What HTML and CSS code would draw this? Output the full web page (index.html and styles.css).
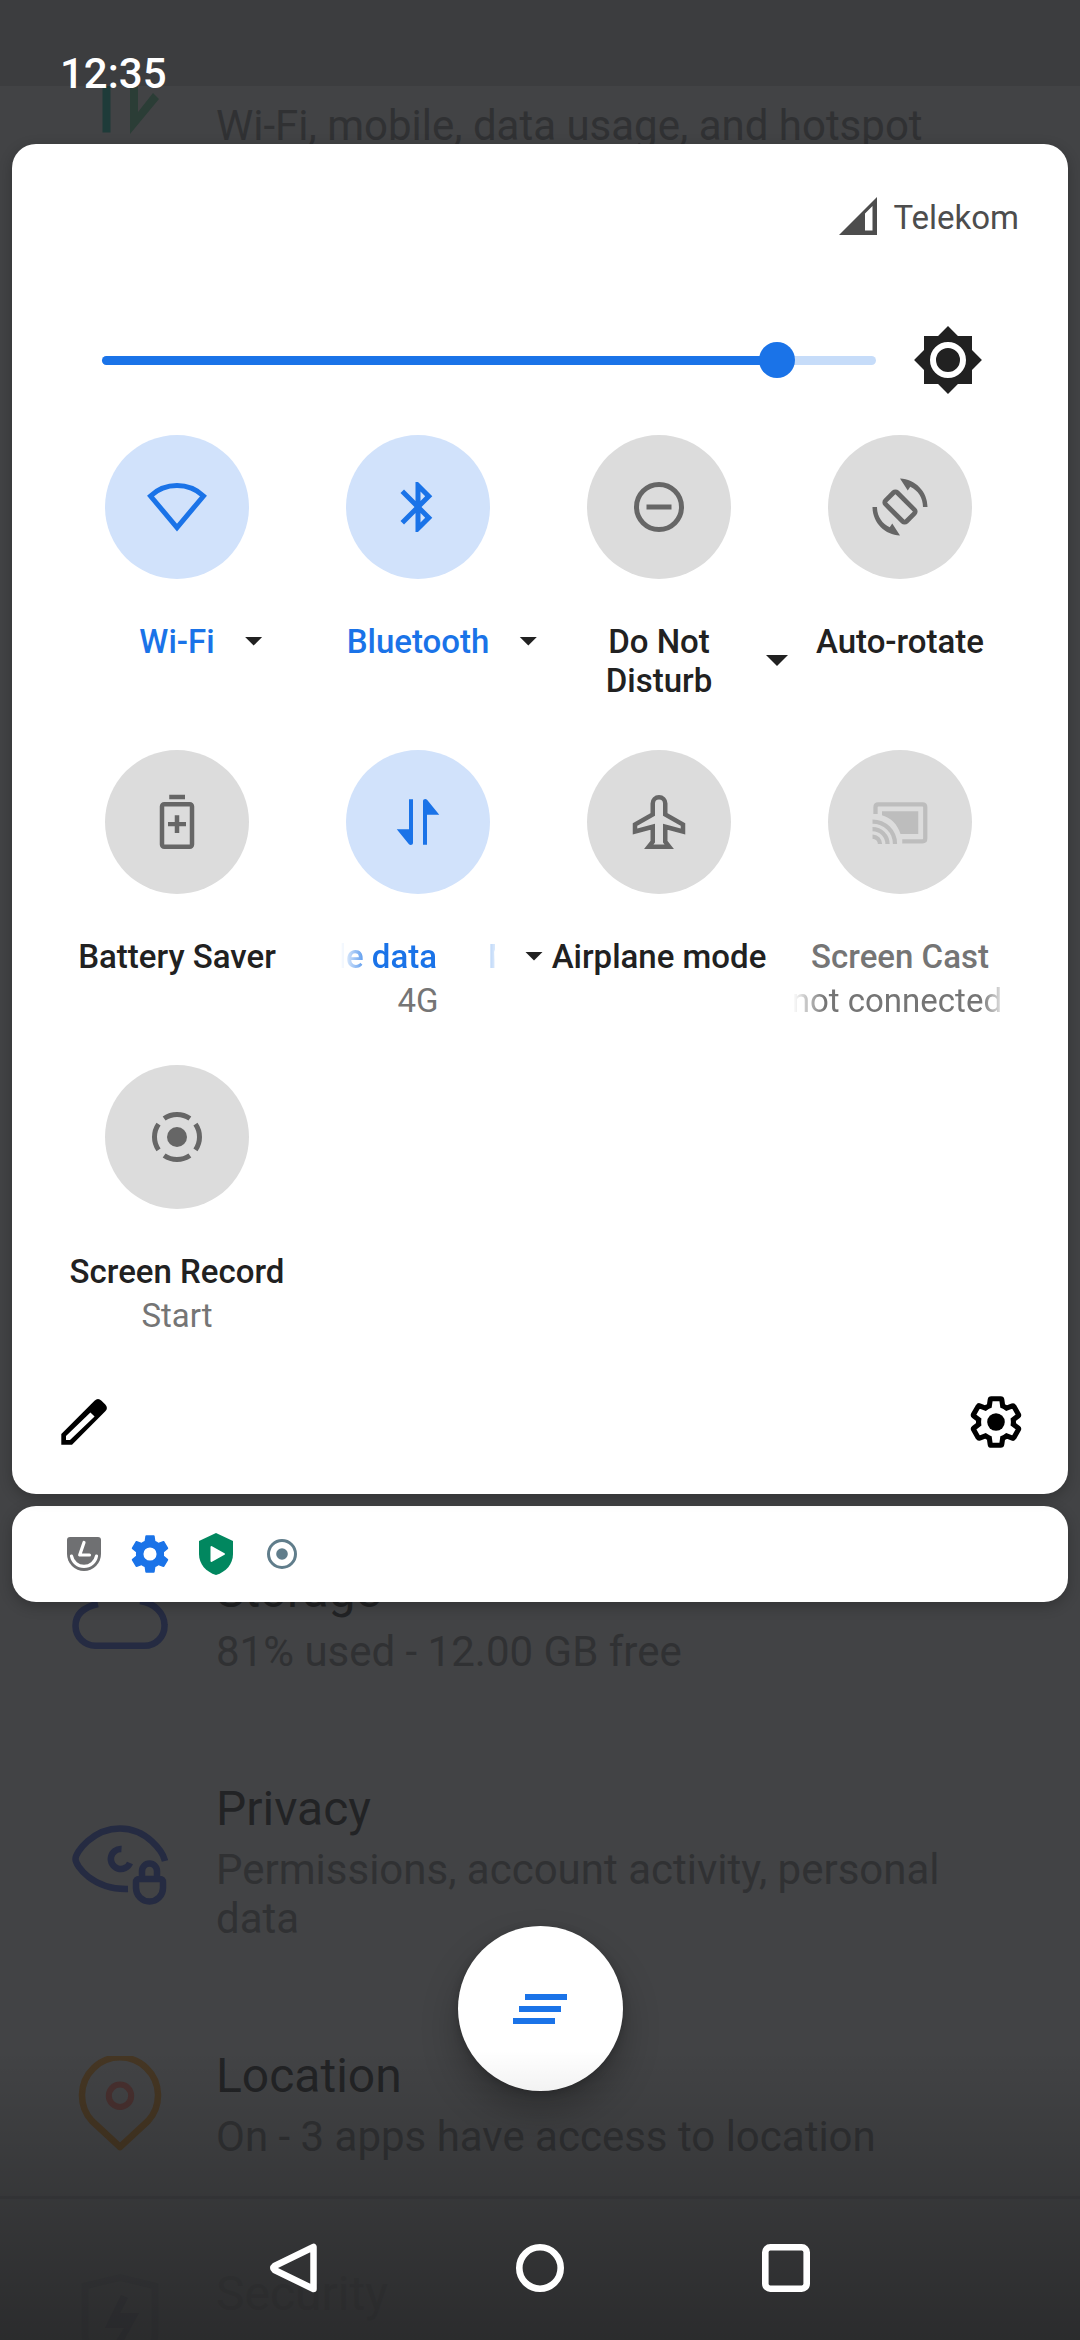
FILE: index.html
```html
<!DOCTYPE html>
<html lang="en">
<head>
<meta charset="utf-8">
<title>Quick settings</title>
<link rel="stylesheet" href="styles.css">
</head>
<body>
<div class="screen">

  <main class="settings">
    <section class="setting">
      <svg class="setting-icon" viewBox="0 0 96 96"><path d="M34.5 10V87.5" stroke="#1e3b39" stroke-width="8"/><path d="M58 20h8v47l15-19 6 6-29 35z" fill="#2b3d36"/></svg>
      <div class="setting-text"><h2>Network &amp; internet</h2><p>Wi‑Fi, mobile, data usage, and hotspot</p></div>
    </section>
    <section class="setting setting-storage">
      <svg class="setting-icon" viewBox="0 0 96 96"><path d="M26 33C12 36 3.500 43 3.500 55A20 20 0 0 0 24 74.800H72A20 20 0 0 0 92.500 54C92.500 42 82 32 68 30" class="line-blue"/></svg>
      <div class="setting-text"><h2>Storage</h2><p>81% used - 12.00 GB free</p></div>
    </section>
    <section class="setting setting-tall">
      <svg class="setting-icon" viewBox="0 0 96 96"><path d="M93 47C91 38 75 14.500 48 14.500C21 14.500 3.500 38 3.500 45S21 76 56 75" class="line-blue"/><path d="M49.500 35A10 10 0 1 0 58 49" class="line-blue"/><path d="M67.500 65H87.500Q91 65 91 68.500V74A13.500 13.500 0 0 1 64 74V68.500Q64 65 67.500 65ZM70 65V57a7.500 7.500 0 0 1 15 0V65" class="line-blue"/></svg>
      <div class="setting-text"><h2>Privacy</h2><p>Permissions, account activity, personal data</p></div>
    </section>
    <section class="setting">
      <svg class="setting-icon" viewBox="0 0 96 96"><path d="M48 91L20 65A38 38 0 1 1 76 65Z" fill="none" stroke="#453623" stroke-width="6.500" stroke-linejoin="round"/><circle cx="48" cy="39.700" r="11.200" fill="none" stroke="#48302f" stroke-width="6"/></svg>
      <div class="setting-text"><h2>Location</h2><p>On - 3 apps have access to location</p></div>
    </section>
    <section class="setting setting-faint">
      <svg class="setting-icon" viewBox="0 0 96 96"><path d="M13 12L48 3.500L83 12V60Q83 80 48 93Q13 80 13 60Z" fill="none" stroke="#3f4043" stroke-width="6.500"/><path d="M49 21L56 24L48 39H67L50 70H42L52 54H33Z" fill="#3d3e42"/></svg>
      <div class="setting-text"><h2>Security</h2></div>
    </section>
  </main>
  <div class="app-bar"></div>

  <div class="shade">
    <header class="status-bar"><span class="clock">12:35</span></header>

    <section class="panel">
      <div class="carrier">
        <svg width="38" height="38" viewBox="0 0 38 38"><path fill-rule="evenodd" d="M0 38L38 0V38ZM26 16.500V33.500H33.500V9Z"/></svg>
        <span>Telekom</span>
      </div>

      <div class="brightness">
        <div class="slider"><div class="slider-fill"></div><div class="slider-thumb"></div></div>
        <svg width="72" height="72" viewBox="0 0 24 24"><path fill="#212121" d="M20 8.690V4h-4.690L12 .69 8.690 4H4v4.690L.69 12 4 15.310V20h4.690L12 23.310 15.310 20H20v-4.690L23.310 12z"/><circle cx="12" cy="12" r="5" fill="none" stroke="#fff" stroke-width="2"/></svg>
      </div>

      <div class="tiles">
        <div class="tile on">
          <div class="bubble"><svg viewBox="6 6 60 60"><path d="M9.500 25A39 39 0 0 1 62.500 25L36 56.500Z" fill="none" stroke="currentColor" stroke-width="5"/></svg></div>
          <div class="label">Wi-Fi<i class="arrow"></i></div>
        </div>
        <div class="tile on">
          <div class="bubble"><svg viewBox="0 0 24 24"><path fill="currentColor" d="M17.710 7.710L12 2h-1v7.590L6.410 5 5 6.410 10.590 12 5 17.590 6.410 19 11 14.410V22h1l5.710-5.710L13.410 12zM13 5.830l1.880 1.880L13 9.590zM14.880 16.290L13 18.170v-3.760z"/></svg></div>
          <div class="label">Bluetooth<i class="arrow"></i></div>
        </div>
        <div class="tile">
          <div class="bubble"><svg viewBox="0 0 24 24"><circle cx="12" cy="12" r="9" fill="none" stroke="currentColor" stroke-width="2"/><path fill="currentColor" d="M7 11h10v2H7z"/></svg></div>
          <div class="label label-wrap">Do Not Disturb<i class="arrow arrow-large"></i></div>
        </div>
        <div class="tile">
          <div class="bubble"><svg viewBox="0 0 24 24"><path id="turn" fill="currentColor" d="M12 .6C18.100.8 23 5.800 23 12h-1.800c0-3.600-2-6.700-5.100-8.100l-1 1.500z"/><use href="#turn" transform="rotate(180 12 12)"/><rect x="6.100" y="8.700" width="11.800" height="6.600" rx="1" transform="rotate(45 12 12)" fill="none" stroke="currentColor" stroke-width="1.900"/></svg></div>
          <div class="label">Auto-rotate</div>
        </div>

        <div class="tile">
          <div class="bubble"><svg viewBox="0 0 24 24"><path fill="currentColor" d="M8.900 1.100h6.300v1.800H8.900zM11.100 9.300h1.800v2.700h2.700v1.700h-2.700v2.700h-1.800v-2.700H8.400V12h2.700z"/><rect x="6" y="4.900" width="12" height="17" rx=".9" fill="none" stroke="currentColor" stroke-width="1.800"/></svg></div>
          <div class="label">Battery Saver</div>
        </div>
        <div class="tile on">
          <div class="bubble"><svg viewBox="0 0 24 24"><path id="flow" fill="currentColor" d="M8.400 2.900h1.600v17.400c0 .9-1.100 1.200-1.700.5L3.500 14.900h4.900z"/><use href="#flow" transform="rotate(180 12 12)"/></svg></div>
          <div class="label label-wrap"><div class="marquee"><span>Mobile data</span><span>Mobile data</span></div><i class="arrow"></i></div>
          <div class="sub">4G</div>
        </div>
        <div class="tile">
          <div class="bubble"><svg viewBox="0 0 24 24"><path d="M9.500 9V4.600a2.500 2.500 0 0 1 5 0V9l7.100 4v2.800L14.500 13.900V19.900L16.100 21.900H7.900L9.500 19.900V13.900L2.400 15.800V13Z" fill="none" stroke="currentColor" stroke-width="1.800"/></svg></div>
          <div class="label">Airplane mode</div>
        </div>
        <div class="tile unavailable">
          <div class="bubble"><svg viewBox="0 0 24 24"><path fill="currentColor" d="M4.800 7.700H19.300V16.800H12.200C11 13 8.500 10.300 4.800 9.300Z"/><path d="M2.200 8.800V6q0-1.100 1.100-1.100H21q1.100 0 1.100 1.100v12.600q0 1.100-1.100 1.100H12.900M1 11.800a9 9 0 0 1 9 9M1 14.800a6 6 0 0 1 6 6M1 17.800a3 3 0 0 1 3 3" fill="none" stroke="currentColor" stroke-width="1.700"/></svg></div>
          <div class="label">Screen Cast</div>
          <div class="sub sub-scroll">Wi-Fi not connected</div>
        </div>

        <div class="tile">
          <div class="bubble"><svg viewBox="0 0 24 24"><circle cx="12" cy="12" r="4" fill="currentColor"/><circle cx="12" cy="12" r="9" pathLength="360" fill="none" stroke="currentColor" stroke-width="2" stroke-dasharray="70 20" stroke-dashoffset="35"/></svg></div>
          <div class="label">Screen Record</div>
          <div class="sub">Start</div>
        </div>
      </div>

      <footer class="panel-footer">
        <svg width="48" height="48" viewBox="0 0 48 48"><path fill-rule="evenodd" d="M1.300 36L34.500 2.800Q38-.6 41.500 2.800L45.300 6.600Q48.500 10 45.300 13.200L12 46.700H1.300ZM6 38V42H10L34.600 18.600 30.400 14.400Z"/></svg>
        <svg width="62" height="62" viewBox="0 0 24 24"><path transform="translate(12 12) scale(.9) translate(-12 -12)" fill="none" stroke="#000" stroke-width="2.200" d="M19.430 12.980c.04-.32.07-.64.07-.98s-.03-.66-.07-.98l2.110-1.650c.19-.15.24-.42.12-.64l-2-3.460c-.12-.22-.39-.3-.61-.22l-2.490 1c-.52-.4-1.080-.73-1.690-.98l-.38-2.650C14.460 2.180 14.250 2 14 2h-4c-.25 0-.46.18-.49.42l-.38 2.650c-.61.25-1.170.59-1.690.98l-2.490-1c-.23-.09-.49 0-.61.22l-2 3.460c-.13.22-.07.49.12.64l2.110 1.650c-.04.32-.07.65-.07.98s.03.66.07.98l-2.110 1.650c-.19.15-.24.42-.12.64l2 3.460c.12.22.39.3.61.22l2.490-1c.52.4 1.080.73 1.690.98l.38 2.650c.03.24.24.42.49.42h4c.25 0 .46-.18.49-.42l.38-2.650c.61-.25 1.170-.59 1.690-.98l2.490 1c.23.09.49 0 .61-.22l2-3.460c.12-.22.07-.49-.12-.64z"/><circle cx="12" cy="12" r="3.400"/></svg>
      </footer>
    </section>

    <section class="shelf">
      <svg viewBox="0 0 48 48"><path fill="#6f7072" d="M7 10q0-3 3-3H38q3 0 3 3V24a17 17 0 0 1-34 0Z"/><path d="M24 12.500L19.700 25H29.500M11.500 26a12.700 12.700 0 0 0 25 0" fill="none" stroke="#fff" stroke-width="3.200" stroke-linecap="round" stroke-linejoin="round"/></svg>
      <svg viewBox="-.8 -.8 25.600 25.600"><path fill="#1a73e8" fill-rule="evenodd" d="M19.430 12.980c.04-.32.07-.64.07-.98s-.03-.66-.07-.98l2.110-1.650c.19-.15.24-.42.12-.64l-2-3.460c-.12-.22-.39-.3-.61-.22l-2.490 1c-.52-.4-1.080-.73-1.690-.98l-.38-2.650C14.460 2.180 14.250 2 14 2h-4c-.25 0-.46.18-.49.42l-.38 2.650c-.61.25-1.170.59-1.690.98l-2.490-1c-.23-.09-.49 0-.61.22l-2 3.460c-.13.22-.07.49.12.64l2.110 1.650c-.04.32-.07.65-.07.98s.03.66.07.98l-2.110 1.650c-.19.15-.24.42-.12.64l2 3.460c.12.22.39.3.61.22l2.490-1c.52.4 1.080.73 1.690.98l.38 2.650c.03.24.24.42.49.42h4c.25 0 .46-.18.49-.42l.38-2.650c.61-.25 1.170-.59 1.690-.98l2.490 1c.23.09.49 0 .61-.22l2-3.460c.12-.22.07-.49-.12-.64zM12 15.500a3.500 3.500 0 1 1 0-7 3.500 3.500 0 0 1 0 7z"/></svg>
      <svg viewBox="0 0 48 48"><path fill="#01875f" d="M24 3L41 11V24C41 34 34 42 24 45C14 42 7 34 7 24V11Z"/><path d="M19.500 17V31L32 24Z" fill="#fff" stroke="#fff" stroke-width="2" stroke-linejoin="round"/></svg>
      <svg viewBox="0 0 48 48"><circle cx="24" cy="24" r="13.500" fill="none" stroke="#607d8b" stroke-width="3"/><circle cx="24" cy="24" r="5.800" fill="#607d8b"/></svg>
    </section>

    <button class="clear-all" aria-label="Clear all">
      <svg width="54" height="30" viewBox="0 0 54 30"><path fill="#1a73e8" d="M12 0h42v6H12zM6 12h42v6H6zM0 24h42v6H0z"/></svg>
    </button>
  </div>

  <div class="nav-fade"></div>
  <nav class="nav-bar">
    <svg viewBox="0 0 60 60"><path d="M49.500 9V51L10.500 32Q8 30 10.500 28Z" fill="none" stroke="#fff" stroke-width="6.500" stroke-linejoin="round"/></svg>
    <svg viewBox="0 0 60 60"><circle cx="30" cy="30" r="20.700" fill="none" stroke="#fff" stroke-width="6.600"/></svg>
    <svg viewBox="0 0 60 60"><rect x="9.300" y="9.300" width="41.400" height="41.400" rx="5" fill="none" stroke="#fff" stroke-width="6.600"/></svg>
  </nav>
</div>
</body>
</html>
```

FILE: styles.css
```css
* { box-sizing: border-box; }

body {
  margin: 0;
  font-family: Roboto, "Noto Sans", sans-serif;
}

svg { display: block; flex: none; }

.screen {
  position: relative;
  width: 1080px;
  height: 2340px;
  overflow: hidden;
  background: #424345;
}

/* Dimmed settings list behind the shade */
.settings { margin-top: -16px; display: flow-root; }

.setting {
  display: flex;
  align-items: center;
  height: 218px;
  padding: 0 120px 0 72px;
  gap: 48px;
}
.setting-storage { margin-top: 1308px; }
.setting-tall { height: 267px; }
.setting-icon { width: 96px; height: 96px; }
.line-blue { fill: none; stroke: #252b42; stroke-width: 6.5; }
.setting-text { display: flex; flex-direction: column; gap: 8px; }
.setting h2 {
  margin: 0;
  font-size: 48px;
  line-height: 56px;
  font-weight: 400;
  color: #222325;
}
.setting p {
  margin: 0;
  font-size: 42px;
  line-height: 49px;
  color: #303133;
}
.setting-faint .setting-text { height: 113px; }
.setting-faint h2 { color: #3e3f41; }

.app-bar {
  position: absolute;
  inset: 0 0 auto;
  height: 86px;
  background: #3c3d3f;
}

/* Notification shade */
.shade {
  position: absolute;
  inset: 0;
  display: flex;
  flex-direction: column;
  padding: 0 12px;
}

.status-bar {
  height: 144px;
  padding: 49px 0 0 48px;
}
.clock {
  font-size: 42px;
  line-height: 50px;
  font-weight: 500;
  color: #fff;
}

.panel, .shelf {
  background: #fff;
  border-radius: 24px;
  box-shadow: 0 4px 14px rgba(0, 0, 0, .24);
}

.panel {
  position: relative;
  z-index: 1;
  height: 1350px;
  display: flex;
  flex-direction: column;
}

.carrier {
  display: flex;
  justify-content: flex-end;
  align-items: center;
  gap: 16px;
  height: 144px;
  padding-right: 49px;
  font-size: 33px;
  line-height: 39px;
  color: #4d4d4d;
  fill: #4d4d4d;
}
.carrier span { padding-top: 2px; }

.brightness {
  display: flex;
  align-items: center;
  gap: 36px;
  height: 144px;
  padding-left: 90px;
}
.slider {
  position: relative;
  width: 774px;
  height: 9px;
  border-radius: 5px;
  background: #c6dcf9;
}
.slider-fill {
  width: 675px;
  height: 9px;
  border-radius: 5px;
  background: #1a73e8;
}
.slider-thumb {
  position: absolute;
  left: 657px;
  top: -13.5px;
  width: 36px;
  height: 36px;
  border-radius: 50%;
  background: #1a73e8;
}

.tiles {
  display: grid;
  grid-template-columns: repeat(4, 241px);
  grid-auto-rows: 315px;
  padding: 3px 0 0 44.5px;
}
.tile {
  display: flex;
  flex-direction: column;
  align-items: center;
  color: #212121;
}
.bubble {
  display: grid;
  place-items: center;
  width: 144px;
  height: 144px;
  margin-bottom: 43px;
  border-radius: 50%;
  background: #dcdcdc;
  color: #666;
}
.bubble svg { width: 60px; height: 60px; overflow: visible; }
.on { color: #1a73e8; }
.on .bubble { background: #d1e2fb; color: #1a73e8; }
.unavailable { color: #757575; }
.unavailable .bubble { color: #bdbdbd; }

.label {
  position: relative;
  font-size: 33px;
  line-height: 39px;
  font-weight: 500;
  text-align: center;
  white-space: nowrap;
}
.label-wrap { width: 154px; white-space: normal; }
.arrow {
  position: absolute;
  left: calc(100% + 30px);
  top: 50%;
  width: 18px;
  height: 9px;
  margin-top: -5px;
  background: #212121;
  clip-path: polygon(0 0, 100% 0, 50% 100%);
}
.arrow-large { width: 22px; height: 11px; margin-top: -6px; }

.marquee {
  display: flex;
  gap: 51px;
  overflow: hidden;
  white-space: nowrap;
  -webkit-mask-image: linear-gradient(90deg, transparent, #000 32px, #000 122px, transparent 160px);
  mask-image: linear-gradient(90deg, transparent, #000 32px, #000 122px, transparent 160px);
}
.marquee span { flex: none; }
.marquee span:first-child { margin-left: -78px; }

.sub {
  margin-top: 5px;
  font-size: 33px;
  line-height: 39px;
  color: #757575;
}
.sub-scroll {
  display: flex;
  justify-content: flex-end;
  width: 214px;
  padding-right: 5px;
  overflow: hidden;
  white-space: nowrap;
  -webkit-mask-image: linear-gradient(90deg, transparent, #000 32px, #000 188px, transparent);
  mask-image: linear-gradient(90deg, transparent, #000 32px, #000 188px, transparent);
}

.panel-footer {
  display: flex;
  justify-content: space-between;
  align-items: center;
  height: 96px;
  margin-top: -6px;
  padding: 0 41px 0 48px;
}

.shelf {
  display: flex;
  align-items: center;
  gap: 18px;
  height: 96px;
  margin-top: 12px;
  padding-left: 48px;
}
.shelf svg { width: 48px; height: 48px; }

.clear-all {
  display: grid;
  place-items: center;
  align-self: center;
  width: 165px;
  height: 165px;
  margin-top: 324px;
  padding: 0;
  border: 0;
  border-radius: 50%;
  background: #fff;
  box-shadow: 0 20px 36px rgba(0, 0, 0, .26), 0 2px 8px rgba(0, 0, 0, .2);
}

.nav-fade {
  position: absolute;
  inset: auto 0 0;
  height: 290px;
  background: linear-gradient(rgba(0, 0, 0, 0), rgba(0, 0, 0, .35));
}
.nav-bar {
  position: absolute;
  inset: auto 0 0;
  height: 144px;
  padding-bottom: 3px;
  display: grid;
  grid-template-columns: repeat(3, 246px);
  justify-content: center;
  place-items: center;
  border-top: 3px solid rgba(0, 0, 0, .06);
}
.nav-bar svg { width: 60px; height: 60px; }
```
